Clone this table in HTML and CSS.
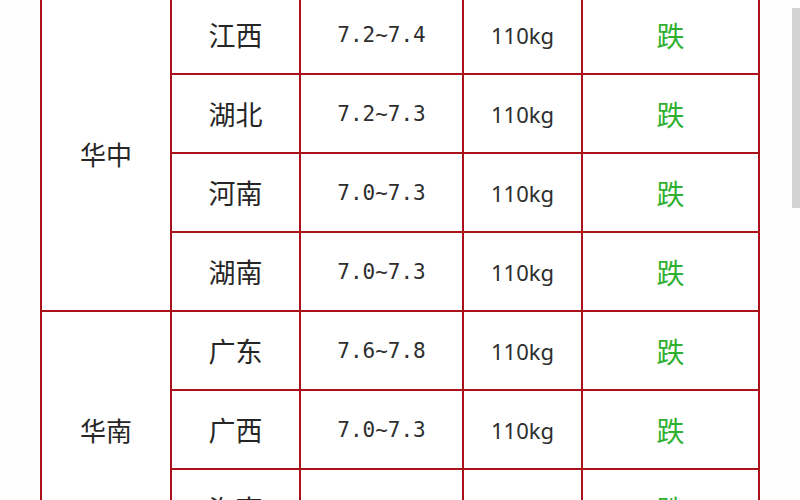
FILE: index.html
```html
<!DOCTYPE html>
<html lang="zh">
<head>
<meta charset="utf-8">
<link rel="stylesheet" href="styles.css">
</head>
<body>
<div class="page">
  <table class="price">
    <colgroup>
      <col class="c-region"><col class="c-prov"><col class="c-price"><col class="c-weight"><col class="c-trend">
    </colgroup>
    <tbody>
      <tr><td class="region" rowspan="4">华中</td><td class="prov">江西</td><td class="num">7.2~7.4</td><td class="wt">110kg</td><td class="trend">跌</td></tr>
      <tr><td class="prov">湖北</td><td class="num">7.2~7.3</td><td class="wt">110kg</td><td class="trend">跌</td></tr>
      <tr><td class="prov">河南</td><td class="num">7.0~7.3</td><td class="wt">110kg</td><td class="trend">跌</td></tr>
      <tr><td class="prov">湖南</td><td class="num">7.0~7.3</td><td class="wt">110kg</td><td class="trend">跌</td></tr>
      <tr><td class="region" rowspan="3">华南</td><td class="prov">广东</td><td class="num">7.6~7.8</td><td class="wt">110kg</td><td class="trend">跌</td></tr>
      <tr><td class="prov">广西</td><td class="num">7.0~7.3</td><td class="wt">110kg</td><td class="trend">跌</td></tr>
      <tr><td class="prov">海南</td><td class="num">6.9~7.1</td><td class="wt">110kg</td><td class="trend">跌</td></tr>
    </tbody>
  </table>
  <div class="scroll-thumb"></div>
</div>
</body>
</html>
```

FILE: styles.css
```css
html, body {
  margin: 0;
  padding: 0;
  background: #ffffff;
}

.page {
  position: relative;
  width: 800px;
  height: 500px;
  overflow: hidden;
  background: #fefefe;
}

.price {
  border-collapse: collapse;
  table-layout: fixed;
  margin: -6px 0 0 40px;
  width: 718px;
  font-family: "Noto Sans CJK SC", "Noto Sans", sans-serif;
  color: #262626;
}

.c-region { width: 130px; }
.c-prov { width: 129px; }
.c-price { width: 163px; }
.c-weight { width: 119px; }
.c-trend { width: 177px; }

.price td {
  border: 2px solid #a9121b;
  height: 77px;
  padding: 0;
  text-align: center;
  vertical-align: middle;
  background: #ffffff;
}

.price tr {
  height: 79px;
}

.region {
  font-size: 26px;
}

.prov {
  font-size: 27px;
}

.num {
  font-family: "DejaVu Sans Mono", monospace;
  font-size: 21px;
  color: #2e2e2e;
}

.wt {
  font-family: "Noto Sans", sans-serif;
  font-size: 22px;
  color: #2e2e2e;
}

.trend {
  font-size: 28px;
  color: #2fb030;
}

.scroll-thumb {
  position: absolute;
  right: 0;
  top: 8px;
  width: 8px;
  height: 200px;
  background: #d2d2d2;
}
```
